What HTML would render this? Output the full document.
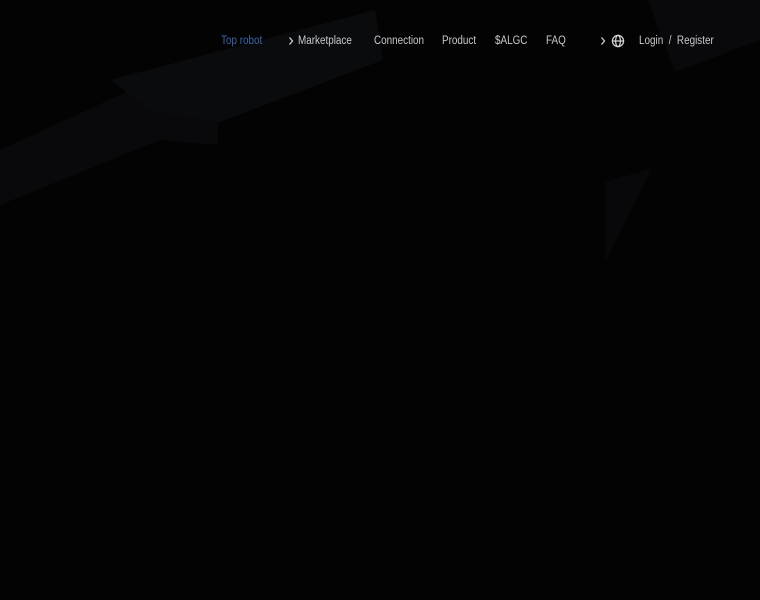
<!DOCTYPE html>
<html><head><style>
body{margin:0;width:760px;height:600px;background:#030304;overflow:hidden;position:relative;font-family:"Liberation Sans",sans-serif}
svg{position:absolute;left:0;top:0}
.t{position:absolute;top:35px;font-size:11.5px;color:#c9cacd;white-space:nowrap;line-height:13px;transform:scaleX(0.86);transform-origin:left}
</style></head><body>
<svg width="760" height="600">
<polygon points="0,150 218,50 218,145 160,140 0,205" fill="#09090c"/>
<polygon points="110,80 375,10 383,60 220,122 150,110" fill="#0a0b0d"/>
<polygon points="648,0 760,0 760,40 675,72" fill="#09090c"/>
<polygon points="605,182 652,168 605,262" fill="#08080b"/>
</svg>
<div class="t" style="left:221px;color:#3d67a8">Top robot</div>
<svg style="left:288px;top:36px" width="6" height="10" viewBox="0 0 6 10" fill="none" stroke="#d0d0d0" stroke-width="1.3"><path d="M1.5 1.5L4.5 5L1.5 8.5"/></svg>
<div class="t" style="left:298px">Marketplace</div>
<div class="t" style="left:374px">Connection</div>
<div class="t" style="left:442px">Product</div>
<div class="t" style="left:495px">$ALGC</div>
<div class="t" style="left:546px">FAQ</div>
<svg style="left:600px;top:36px" width="6" height="10" viewBox="0 0 6 10" fill="none" stroke="#d0d0d0" stroke-width="1.3"><path d="M1.5 1.5L4.5 5L1.5 8.5"/></svg>
<svg style="left:611px;top:34px" width="14" height="14" viewBox="0 0 14 14" fill="none" stroke="#d8d8d8" stroke-width="1.2"><circle cx="7" cy="7" r="5.6"/><ellipse cx="7" cy="7" rx="2.4" ry="5.6"/><line x1="1.4" y1="7" x2="12.6" y2="7"/></svg>
<div class="t" style="left:639px">Login&nbsp;&nbsp;/&nbsp;&nbsp;Register</div>
</body></html>
